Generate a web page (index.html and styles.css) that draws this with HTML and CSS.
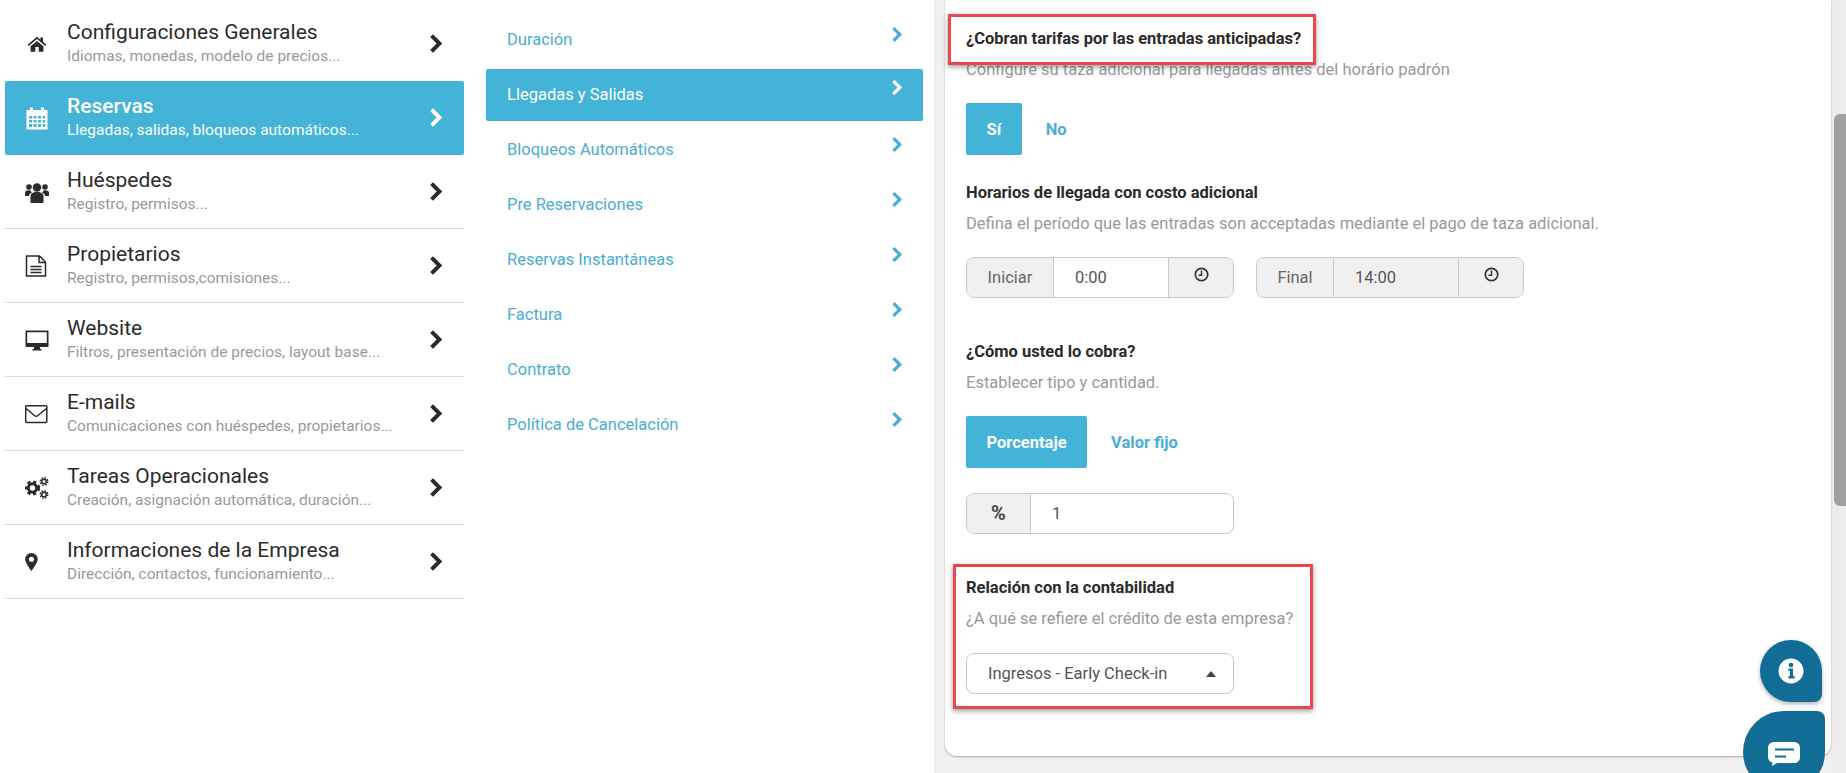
FILE: index.html
```html
<!doctype html>
<html lang="es">
<head>
    <meta charset="UTF-8">
    <meta name="viewport" content="width=device-width, initial-scale=1.0">
    <title>Configuraciones</title>
    <link rel="stylesheet" href="styles.css">
</head>
<body>
    <svg class="sprite" xmlns="http://www.w3.org/2000/svg">
        <symbol id="chevron" viewBox="0 0 12 18"><polyline points="2.2,2.2 9,9 2.2,15.8" fill="none" stroke="currentColor" stroke-width="3.4"/></symbol>
        <symbol id="clock" viewBox="0 0 14 14"><circle cx="7" cy="7" r="5.8" fill="none" stroke="currentColor" stroke-width="1.6"/><path d="M7 3.2V7.8H4.2" fill="none" stroke="currentColor" stroke-width="1.4"/></symbol>
    </svg>

    <div class="page">
        <div class="menus">
            <ul class="main-menu">
                <li class="menu-row">
                    <svg class="menu-icon" viewBox="-2 -2 28 28" width="24" height="24"><path fill="currentColor" d="M12 3.5 1 12.8l1.3 1.5L12 6.2l9.700 8.100 1.300-1.500-4-3.400V4.500h-3v2.500zM4.500 14.700 12 8.400l7.500 6.300V21H14v-5.500h-4V21H4.500z"/></svg>
                    <div class="menu-text">
                        <div class="menu-title">Configuraciones Generales</div>
                        <div class="menu-sub">Idiomas, monedas, modelo de precios...</div>
                    </div>
                    <svg class="chevron"><use href="#chevron"/></svg>
                </li>
                <li class="menu-row active">
                    <svg class="menu-icon" viewBox="0 0 24 24" width="24" height="24"><path fill="currentColor" fill-rule="evenodd" d="M5 1.500h3v2.500h8V1.500h3V4h3.500v19.500h-21V4H5zM4 10v2.500h3.200V10zm4.600 0v2.500h3V10zm4.500 0v2.500h3V10zm4.500 0v2.500H20V10zM4 14v2.500h3.200V14zm4.600 0v2.500h3V14zm4.500 0v2.500h3V14zm4.500 0v2.500H20V14zM4 18v3h3.200v-3zm4.600 0v3h3v-3zm4.500 0v3h3v-3zm4.500 0v3H20v-3z"/></svg>
                    <div class="menu-text">
                        <div class="menu-title">Reservas</div>
                        <div class="menu-sub">Llegadas, salidas, bloqueos automáticos...</div>
                    </div>
                    <svg class="chevron"><use href="#chevron"/></svg>
                </li>
                <li class="menu-row">
                    <svg class="menu-icon" viewBox="0 0 24 24" width="24" height="24"><g fill="currentColor"><circle cx="12" cy="7.500" r="4.200"/><circle cx="4" cy="7" r="2.800"/><circle cx="20" cy="7" r="2.800"/><path d="M5.500 22v-5.500c0-3 2-4.500 6.500-4.500s6.500 1.500 6.500 4.500V22c0 .6-.5 1-1 1h-11c-.5 0-1-.4-1-1z"/><path d="M0 16v-3c0-2 1.500-2.800 3.500-2.800h1.800c.3 1 1 1.700 1.700 2.300-2 .8-3 2-3 3.500zM24 16v-3c0-2-1.500-2.800-3.500-2.800h-1.800c-.3 1-1 1.700-1.700 2.300 2 .8 3 2 3 3.500z"/></g></svg>
                    <div class="menu-text">
                        <div class="menu-title">Huéspedes</div>
                        <div class="menu-sub">Registro, permisos...</div>
                    </div>
                    <svg class="chevron"><use href="#chevron"/></svg>
                </li>
                <li class="menu-row">
                    <svg class="menu-icon" viewBox="0 0 24 24" width="24" height="24"><path fill="none" stroke="currentColor" stroke-width="1.500" d="M1.500 2h13l6 6v14h-19zM14 2v6.500h6.500M5.500 12.500h11M5.500 15.500h11M5.500 18.500h11"/></svg>
                    <div class="menu-text">
                        <div class="menu-title">Propietarios</div>
                        <div class="menu-sub">Registro, permisos,comisiones...</div>
                    </div>
                    <svg class="chevron"><use href="#chevron"/></svg>
                </li>
                <li class="menu-row">
                    <svg class="menu-icon" viewBox="0 0 24 24" width="24" height="24"><path fill="currentColor" fill-rule="evenodd" d="M1.500 2.500h21c.6 0 1 .4 1 1v14.500c0 .6-.4 1-1 1H15v2h1.500v1.500h-9V21H9v-2H1.500c-.6 0-1-.4-1-1V3.500c0-.6.4-1 1-1zM2.200 4.200v10.800h19.600V4.200z"/></svg>
                    <div class="menu-text">
                        <div class="menu-title">Website</div>
                        <div class="menu-sub">Filtros, presentación de precios, layout base...</div>
                    </div>
                    <svg class="chevron"><use href="#chevron"/></svg>
                </li>
                <li class="menu-row">
                    <svg class="menu-icon" viewBox="0 0 24 24" width="24" height="24"><path fill="none" stroke="currentColor" stroke-width="1.500" d="M1.500 3.800h19.500c.4 0 .8.400.8.800v15c0 .4-.4.800-.8.800H1.500c-.4 0-.8-.4-.8-.8v-15c0-.4.400-.8.800-.8zM1 6.500l8.500 7c1 .8 2.500.8 3.500 0l8.500-7"/></svg>
                    <div class="menu-text">
                        <div class="menu-title">E-mails</div>
                        <div class="menu-sub">Comunicaciones con huéspedes, propietarios...</div>
                    </div>
                    <svg class="chevron"><use href="#chevron"/></svg>
                </li>
                <li class="menu-row">
                    <svg class="menu-icon" viewBox="0 0 24 24" width="24" height="24"><g fill="none" stroke="currentColor"><circle cx="7.500" cy="12" r="4.200" stroke-width="3"/><circle cx="7.500" cy="12" r="6.300" stroke-width="2.600" stroke-dasharray="3 2.940"/><circle cx="19" cy="5.500" r="2.300" stroke-width="1.500"/><circle cx="19" cy="5.500" r="3.700" stroke-width="1.500" stroke-dasharray="1.600 1.300"/><circle cx="19" cy="18.500" r="2.300" stroke-width="1.500"/><circle cx="19" cy="18.500" r="3.700" stroke-width="1.500" stroke-dasharray="1.600 1.300"/></g></svg>
                    <div class="menu-text">
                        <div class="menu-title">Tareas Operacionales</div>
                        <div class="menu-sub">Creación, asignación automática, duración...</div>
                    </div>
                    <svg class="chevron"><use href="#chevron"/></svg>
                </li>
                <li class="menu-row">
                    <svg class="menu-icon" viewBox="0 -2 28 28" width="24" height="24"><path fill="currentColor" fill-rule="evenodd" d="M7.500 1.500A7.300 7.300 0 0 0 .2 8.800c0 4 7.300 13.700 7.300 13.700s7.300-9.700 7.300-13.700A7.300 7.300 0 0 0 7.500 1.500zm0 4.300a3 3 0 1 1 0 6 3 3 0 0 1 0-6z"/></svg>
                    <div class="menu-text">
                        <div class="menu-title">Informaciones de la Empresa</div>
                        <div class="menu-sub">Dirección, contactos, funcionamiento...</div>
                    </div>
                    <svg class="chevron"><use href="#chevron"/></svg>
                </li>
            </ul>

            <ul class="sub-menu">
                <li class="sub-row"><span>Duración</span><svg class="sub-chevron"><use href="#chevron"/></svg></li>
                <li class="sub-row active"><span>Llegadas y Salidas</span><svg class="sub-chevron"><use href="#chevron"/></svg></li>
                <li class="sub-row"><span>Bloqueos Automáticos</span><svg class="sub-chevron"><use href="#chevron"/></svg></li>
                <li class="sub-row"><span>Pre Reservaciones</span><svg class="sub-chevron"><use href="#chevron"/></svg></li>
                <li class="sub-row"><span>Reservas Instantáneas</span><svg class="sub-chevron"><use href="#chevron"/></svg></li>
                <li class="sub-row"><span>Factura</span><svg class="sub-chevron"><use href="#chevron"/></svg></li>
                <li class="sub-row"><span>Contrato</span><svg class="sub-chevron"><use href="#chevron"/></svg></li>
                <li class="sub-row"><span>Política de Cancelación</span><svg class="sub-chevron"><use href="#chevron"/></svg></li>
            </ul>
        </div>

        <main class="panel">
            <div class="callout callout-top"></div>
            <div class="callout callout-bottom"></div>

            <h3 class="field-title first">¿Cobran tarifas por las entradas anticipadas?</h3>
            <p class="field-hint">Configure su taza adicional para llegadas antes del horário padrón</p>
            <div class="toggle">
                <span class="toggle-btn on">Sí</span>
                <span class="toggle-btn">No</span>
            </div>

            <h3 class="field-title near">Horarios de llegada con costo adicional</h3>
            <p class="field-hint">Defina el período que las entradas son acceptadas mediante el pago de taza adicional.</p>
            <div class="time-row">
                <div class="input-group time-start">
                    <span class="addon label-start">Iniciar</span>
                    <span class="value">0:00</span>
                    <span class="addon clock-addon"><svg class="clock"><use href="#clock"/></svg></span>
                </div>
                <div class="input-group time-end disabled">
                    <span class="addon label-end">Final</span>
                    <span class="value">14:00</span>
                    <span class="addon clock-addon"><svg class="clock"><use href="#clock"/></svg></span>
                </div>
            </div>

            <h3 class="field-title far">¿Cómo usted lo cobra?</h3>
            <p class="field-hint">Establecer tipo y cantidad.</p>
            <div class="toggle">
                <span class="toggle-btn on">Porcentaje</span>
                <span class="toggle-btn">Valor fijo</span>
            </div>
            <div class="input-group amount">
                <span class="addon percent">%</span>
                <span class="value">1</span>
            </div>

            <h3 class="field-title far">Relación con la contabilidad</h3>
            <p class="field-hint">¿A qué se refiere el crédito de esta empresa?</p>
            <div class="select-box">
                <span>Ingresos - Early Check-in</span>
                <i class="caret"></i>
            </div>
        </main>

        <div class="scrollbar"><div class="scroll-thumb"></div></div>
    </div>

    <div class="fab fab-info">
        <svg viewBox="0 0 26 26" width="26" height="26"><circle cx="13" cy="13" r="12.500" fill="#fff"/><path fill="#116d96" d="M10.500 10.500h4.500v7.500h1.500v2.500h-6V18H12v-5h-1.500z"/><circle cx="13" cy="7" r="2.300" fill="#116d96"/></svg>
    </div>
    <div class="fab fab-chat">
        <svg viewBox="0 0 32 24" width="32" height="24"><path fill="#fff" d="M7 0h19c3 0 6 2 6 6v9c0 4-3 6-6 6H9l-5 3 .5-3.300C2 20 0 18 0 15V6c0-4 3-6 7-6z"/><path stroke="#116d96" stroke-width="2" d="M7 7.500h19M7 14.500h11"/></svg>
    </div>
</body>
</html>
```

FILE: styles.css
```css
:root {
    --blue: #44b3d8;
    --link-blue: #4badd3;
    --dark-blue: #116d96;
    --text: #2b2b2b;
    --muted: #999;
    --line: #dcdcdc;
    --field-line: #c8c8c8;
    --page-bg: #f0f0f0;
}

* {
    box-sizing: border-box;
}

html, body {
    height: 100%;
}

body {
    margin: 0;
    overflow: hidden;
    font-family: Roboto, "Liberation Sans", sans-serif;
    color: var(--text);
    background-color: var(--page-bg);
}

.sprite {
    display: none;
}

.page {
    display: flex;
    align-items: flex-start;
    height: 773px;
}

.menus {
    display: flex;
    width: 934px;
    height: 773px;
    background: #fff;
}

ul {
    list-style: none;
    margin: 0;
    padding: 0;
}

/* first column */
.main-menu {
    width: 459px;
    margin: 6px 0 0 5px;
}

.menu-row {
    display: flex;
    align-items: center;
    height: 74px;
    padding: 0 21px 0 20px;
    border-bottom: 1px solid var(--line);
}

.menu-row:nth-child(1) {
    height: 75px;
    border-bottom: 0;
}

.menu-row:nth-child(2) {
    border-bottom: 0;
}

.menu-row.active {
    background: var(--blue);
    border-radius: 2px;
    color: #fff;
}

.menu-icon {
    flex: none;
    width: 24px;
    height: 24px;
    margin-right: 18px;
}

.menu-text {
    flex: 1;
    padding-bottom: 2px;
}

.menu-title {
    font-size: 21px;
    line-height: 24px;
}

.active .menu-title {
    font-weight: 500;
}

.menu-sub {
    margin-top: 2px;
    font-size: 15.5px;
    line-height: 20px;
    color: var(--muted);
}

.active .menu-sub {
    color: #fff;
}

.chevron {
    flex: none;
    width: 14px;
    height: 21px;
    margin-bottom: 1px;
}

/* second column */
.sub-menu {
    width: 437px;
    margin: 14px 0 0 22px;
}

.sub-row {
    display: flex;
    align-items: center;
    justify-content: space-between;
    height: 55px;
    padding: 0 20px 5px 21px;
    font-size: 16.5px;
    color: var(--link-blue);
}

.sub-row.active {
    height: 52px;
    margin: 0 0 3px;
    padding-bottom: 1px;
    background: var(--blue);
    border-radius: 2px;
    color: #fff;
}

.sub-chevron {
    width: 12px;
    height: 17px;
    margin-bottom: 10px;
}

.sub-row.active .sub-chevron {
    margin-bottom: 14px;
}

/* form panel */
.panel {
    position: relative;
    width: 886px;
    height: 756px;
    margin-left: 11px;
    padding-left: 21px;
    background: #fff;
    border-radius: 0 0 12px 12px;
    box-shadow: 0 1px 2px rgba(0,0,0,0.3);
}

.field-title {
    margin: 0;
    font-size: 16.5px;
    font-weight: 700;
    line-height: 24px;
}

.field-title.first {
    padding-top: 27px;
}

.field-title.near {
    margin-top: 26px;
}

.field-title.far {
    margin-top: 42px;
}

.field-hint {
    margin: 7px 0 0;
    font-size: 16.5px;
    line-height: 24px;
    color: var(--muted);
}

.toggle {
    display: flex;
    margin-top: 21px;
}

.toggle-btn {
    display: flex;
    align-items: center;
    height: 52px;
    padding: 0 20px 0 24px;
    font-size: 16.5px;
    font-weight: 700;
    color: var(--link-blue);
}

.toggle-btn.on {
    padding: 0 20.5px;
    background: var(--blue);
    border-radius: 2px;
    color: #fff;
}

.time-row {
    display: flex;
    gap: 22px;
    margin-top: 21px;
}

.input-group {
    display: flex;
    height: 41px;
    border: 1px solid var(--field-line);
    border-radius: 8px;
    overflow: hidden;
    font-size: 16.5px;
    line-height: 39px;
    color: #555;
}

.time-start,
.time-end,
.amount {
    width: 268px;
}

.amount {
    margin-top: 25px;
}

.addon {
    flex: none;
    text-align: center;
    background: var(--page-bg);
    color: #666;
}

.label-start {
    width: 87px;
    border-right: 1px solid var(--field-line);
}

.label-end {
    width: 77px;
    border-right: 1px solid var(--field-line);
}

.value {
    flex: 1;
    padding-left: 21px;
}

.disabled .value {
    background: var(--page-bg);
}

.clock-addon {
    width: 65px;
    border-left: 1px solid var(--field-line);
    color: #333;
}

.clock {
    display: block;
    width: 15px;
    height: 15px;
    margin: 9px auto 0;
}

.percent {
    width: 64px;
    border-right: 1px solid var(--field-line);
    font-size: 20px;
    font-weight: 700;
    color: #444;
}

.select-box {
    display: flex;
    align-items: center;
    justify-content: space-between;
    width: 268px;
    height: 41px;
    margin-top: 22px;
    padding: 0 17px 0 21px;
    border: 1px solid var(--field-line);
    border-radius: 8px;
    font-size: 16.5px;
    color: #555;
}

.caret {
    width: 0;
    height: 0;
    border-left: 5.5px solid transparent;
    border-right: 5.5px solid transparent;
    border-bottom: 6px solid #444;
}

/* red marks drawn over the form */
.callout {
    position: absolute;
    border: 3px solid #e8494f;
    box-shadow: 0 2px 5px rgba(0,0,0,0.4);
}

.callout-top {
    left: 3px;
    top: 14px;
    width: 368px;
    height: 51px;
}

.callout-bottom {
    left: 8px;
    top: 564px;
    width: 360px;
    height: 145px;
}

.scrollbar {
    width: 15px;
    height: 773px;
    padding: 114px 0 0 3px;
    background: #ededed;
}

.scroll-thumb {
    height: 392px;
    background: #a0a0a0;
    border-radius: 6px 0 0 6px;
}

/* floating buttons */
.fab {
    position: absolute;
    display: flex;
    justify-content: center;
    background: var(--dark-blue);
}

.fab-info {
    left: 1760px;
    top: 640px;
    width: 62px;
    height: 62px;
    align-items: center;
    border-radius: 50% 50% 8px 50%;
    box-shadow: 0 2px 4px rgba(0,0,0,0.3);
}

.fab-chat {
    left: 1743px;
    top: 711px;
    width: 82px;
    height: 82px;
    padding-top: 31px;
    border-radius: 50% 8px 50% 50%;
}
```
